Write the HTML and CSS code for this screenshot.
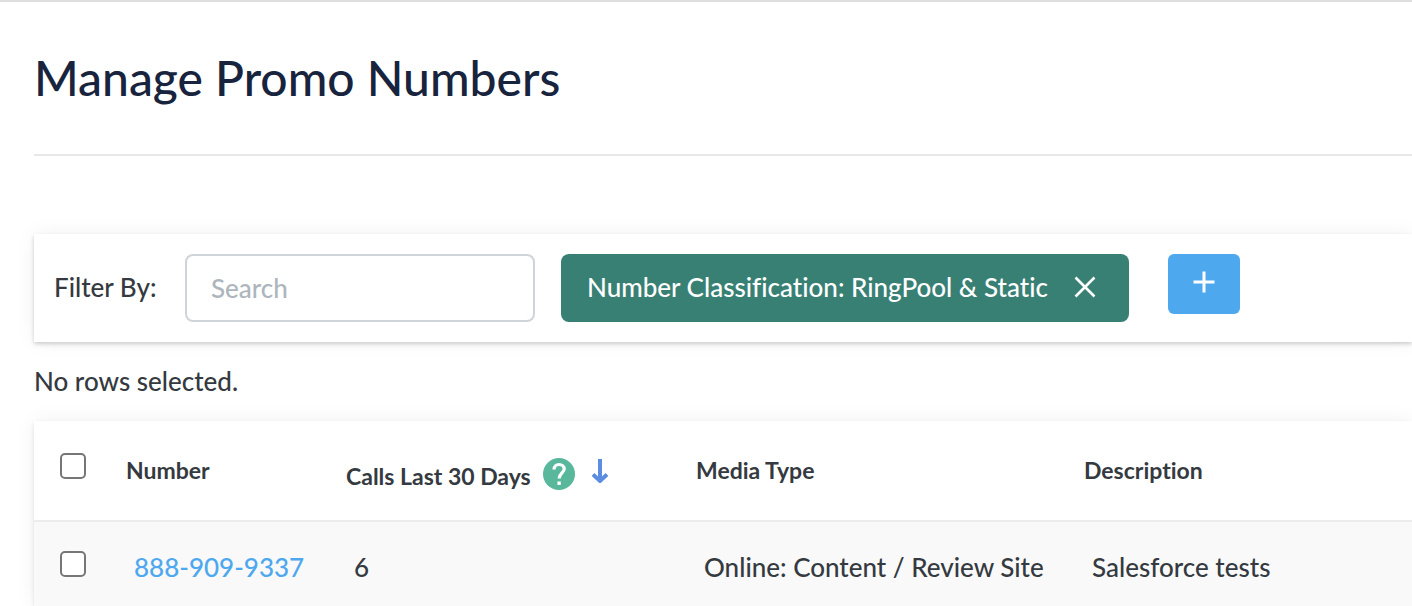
FILE: index.html
```
<!DOCTYPE html>
<html lang="en">
<head>
<meta charset="utf-8">
<title>Manage Promo Numbers</title>
<link rel="stylesheet" href="styles.css">
</head>
<body>
<main class="page">
  <header class="page-header">
    <h1 class="page-title">Manage Promo Numbers</h1>
  </header>

  <form class="filter-bar">
    <label class="filter-label" for="search">Filter By:</label>
    <input class="search" id="search" type="text" placeholder="Search">
    <button class="chip" type="button">
      <span>Number Classification: RingPool &amp; Static</span>
      <svg class="chip-close" viewBox="0 0 22 22" aria-hidden="true"><path d="M1.500 1.500 20.500 20.500M20.500 1.500 1.500 20.500"/></svg>
    </button>
    <button class="add" type="button" aria-label="Add filter">
      <svg class="add-icon" viewBox="0 0 22 22" aria-hidden="true"><path d="M11 0.500V21.500M0.500 11H21.500"/></svg>
    </button>
  </form>

  <p class="selection">No rows selected.</p>

  <div class="table-card">
    <table class="numbers">
      <colgroup>
        <col class="col-check"><col class="col-number"><col class="col-calls"><col class="col-media"><col>
      </colgroup>
      <thead>
        <tr>
          <th class="check-cell"><input class="check" type="checkbox" aria-label="Select all rows"></th>
          <th>Number</th>
          <th>
            <div class="calls-head">
              <span class="calls-text">Calls Last 30 Days</span>
              <svg class="help" viewBox="0 0 32 32" role="img" aria-label="Help"><circle cx="16" cy="16" r="16" fill="#59b89b"/><path d="M11 11.500C11 8.300 13.200 6.500 16 6.500S21.200 8.400 21.200 11C21.200 14.600 16.100 15.300 16.100 20.500" fill="none" stroke="#fff" stroke-width="3.200"/><path d="M14.400 23.500h3.400v3.400h-3.400z" fill="#fff"/></svg>
              <svg class="sort" viewBox="0 0 16 24" role="img" aria-label="Sorted descending"><path d="M8 0V22M1 15.500 8 22 15 15.500"/></svg>
            </div>
          </th>
          <th>Media Type</th>
          <th>Description</th>
        </tr>
      </thead>
      <tbody>
        <tr>
          <td class="check-cell"><input class="check" type="checkbox" aria-label="Select 888-909-9337"></td>
          <td><a class="number-link" href="#">888-909-9337</a></td>
          <td>6</td>
          <td>Online: Content / Review Site</td>
          <td>Salesforce tests</td>
        </tr>
      </tbody>
    </table>
  </div>
</main>
</body>
</html>
```
FILE: styles.css
```
* {
  box-sizing: border-box;
}

body {
  margin: 0;
  border-top: 2px solid #dedede;
  background: #fff;
  color: #343a40;
  font: 500 26px/40px Lato, "Liberation Sans", sans-serif;
  font-variant-ligatures: none;
}

button,
input {
  font: inherit;
}

.page {
  padding-left: 34px;
  overflow: hidden;
}

.page-header {
  padding: 45px 0;
  border-bottom: 2px solid #e8e8e8;
}

.page-title {
  margin: 0;
  color: #18243d;
  font-size: 48px;
  font-weight: 500;
  line-height: 62px;
}

.filter-bar {
  display: flex;
  align-items: flex-start;
  margin-top: 78px;
  padding: 20px;
  box-shadow: 0 2px 4px rgba(0, 0, 0, 0.18), 0 0 20px rgba(0, 0, 0, 0.06);
}

.filter-label {
  width: 131px;
  line-height: 66px;
}

.search {
  width: 350px;
  height: 68px;
  padding: 0 24px;
  border: 2px solid #ced4da;
  border-radius: 8px;
  background: #fff;
  color: #343a40;
}

.search::placeholder {
  color: #adb5bd;
  opacity: 1;
}

.chip {
  display: flex;
  align-items: center;
  gap: 26px;
  height: 68px;
  margin-left: 26px;
  padding: 0 33px 2px 26px;
  border: 0;
  border-radius: 8px;
  background: #388074;
  color: #fff;
  font-variant-ligatures: none;
  white-space: nowrap;
}

.chip-close {
  width: 22px;
  height: 22px;
  stroke: #fff;
  stroke-width: 2.600;
}

.add {
  display: flex;
  justify-content: center;
  width: 72px;
  height: 60px;
  margin-left: 39px;
  padding: 17px 0 0;
  border: 0;
  border-radius: 6px;
  background: #4ea8ee;
}

.add-icon {
  width: 22px;
  height: 22px;
  stroke: #fff;
  stroke-width: 3;
}

.selection {
  margin: 19px 0 20px;
}

.table-card {
  box-shadow: 0 2px 4px rgba(0, 0, 0, 0.1), 0 0 20px rgba(0, 0, 0, 0.06);
}

.numbers {
  width: 100%;
  table-layout: fixed;
  border-collapse: collapse;
}

.col-check {
  width: 84px;
}

.col-number {
  width: 220px;
}

.col-calls {
  width: 350px;
}

.col-media {
  width: 388px;
}

.numbers th {
  height: 100px;
  padding: 29px 8px 0;
  border-bottom: 2px solid #ececec;
  font-size: 23px;
  font-weight: 700;
  text-align: left;
  vertical-align: top;
}

.numbers td {
  height: 85px;
  padding: 25px 16px 0;
  background: #f9f9f9;
  vertical-align: top;
  white-space: nowrap;
}

.numbers .check-cell {
  padding: 29px 26px 0;
}

.numbers th.check-cell {
  padding-top: 32px;
}

.check {
  display: block;
  width: 26px;
  height: 26px;
  margin: 0;
  border: 2px solid #767676;
  border-radius: 5px;
  background: #fff;
  appearance: none;
}

.check:checked {
  background: #4ea8ee;
}

.number-link {
  color: #4ea8ee;
  text-decoration: none;
}

.calls-head {
  display: flex;
  align-items: flex-start;
  padding-top: 6px;
}

.calls-text {
  width: 197px;
}

.help {
  width: 32px;
  height: 32px;
  margin-top: 2px;
}

.sort {
  width: 16px;
  height: 24px;
  margin: 3px 0 0 17px;
  fill: none;
  stroke: #5b8de0;
  stroke-width: 4;
}
```
